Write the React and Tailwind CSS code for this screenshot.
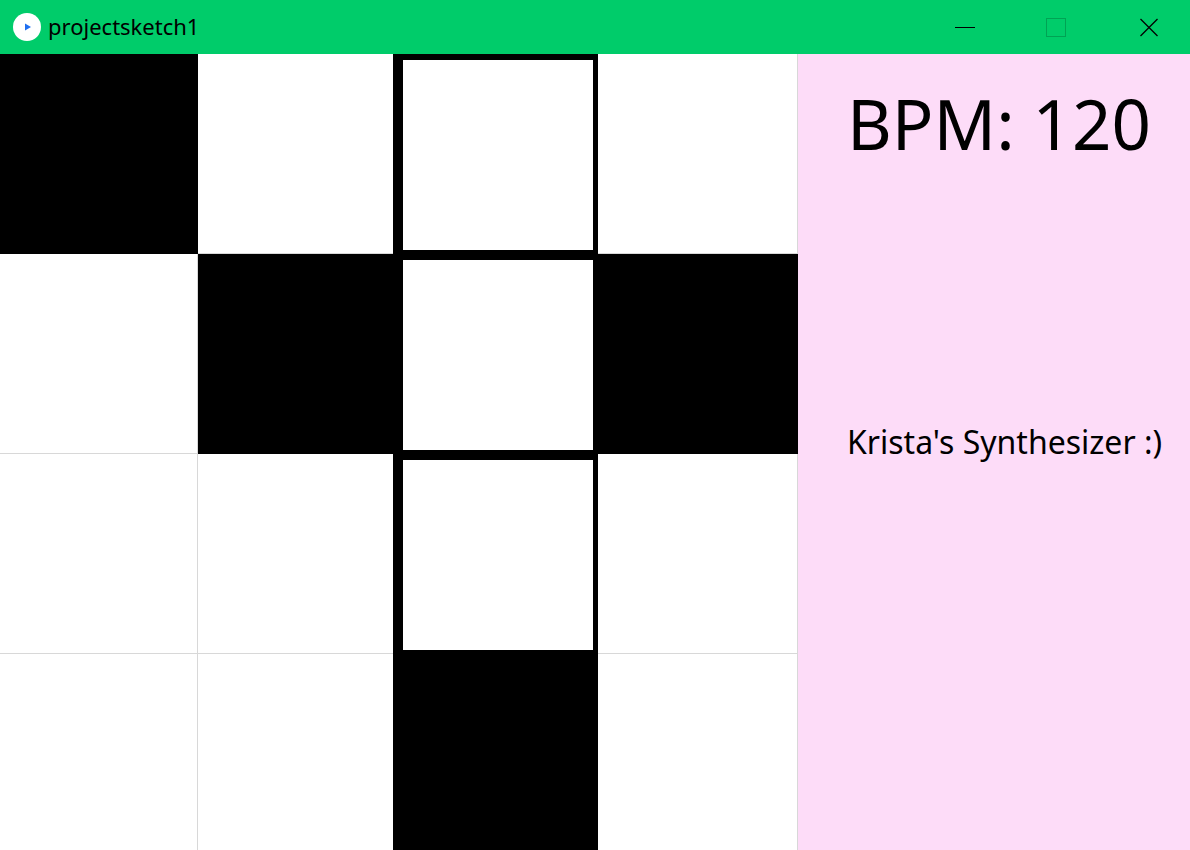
const GRAY = 'border-[#d8d8d8]'

const Cell = ({ dark, right = true }) => (
  <div
    className={`h-[200px] shrink-0 border-b ${right ? 'border-r' : ''} ${
      dark ? 'bg-black border-black' : `bg-white ${GRAY}`
    }`}
  />
)

export default function App() {
  return (
    <div className="w-[1190px] h-[850px] overflow-hidden flex flex-col bg-white" style={{ fontFamily: '"Noto Sans", "Open Sans", sans-serif' }}>
      {/* title bar */}
      <div className="h-[54px] shrink-0 bg-[#00cc6a] flex items-center">
        <div className="ml-[13px] w-[28px] h-[28px] rounded-full bg-white flex items-center justify-center">
          <svg width="8" height="8" viewBox="0 0 8 8" className="ml-[1px]">
            <path d="M1 0.5 L7 4 L1 7.5 Z" fill="#1f6ff0" />
          </svg>
        </div>
        <span className="ml-[7px] text-[22px] text-black leading-none pb-[2px]">projectsketch1</span>
        <div className="flex-1" />
        <div className="w-[20px] h-px bg-black" />
        <div className="ml-[71px] w-[20px] h-[19px] border border-black/20" />
        <svg width="20" height="19" viewBox="0 0 20 19" className="ml-[73px] mr-[31px] mt-[1px]">
          <path d="M1.5 1 L18.5 18 M18.5 1 L1.5 18" stroke="#000" strokeWidth="1.3" fill="none" />
        </svg>
      </div>

      {/* content */}
      <div className="flex flex-1 min-h-0">
        <div className="w-[198px] flex flex-col">
          <Cell dark />
          <Cell />
          <Cell />
          <Cell />
        </div>
        <div className="w-[195px] flex flex-col">
          <Cell right={false} />
          <Cell dark right={false} />
          <Cell right={false} />
          <Cell right={false} />
        </div>
        <div className="w-[205px] bg-black pl-[10px] pr-[5px] pt-[6px] flex flex-col gap-[10px]">
          <div className="h-[190px] bg-white" />
          <div className="h-[190px] bg-white" />
          <div className="h-[190px] bg-white" />
        </div>
        <div className="w-[200px] flex flex-col">
          <Cell />
          <Cell dark />
          <Cell />
          <Cell />
        </div>
        <div className="flex-1 bg-[#fddcf8] flex flex-col pl-[49px] text-black">
          <div className="mt-[35px] text-[69px] leading-none">BPM: 120</div>
          <div className="mt-[268px] text-[32px] leading-none">Krista's Synthesizer :)</div>
        </div>
      </div>
    </div>
  )
}
